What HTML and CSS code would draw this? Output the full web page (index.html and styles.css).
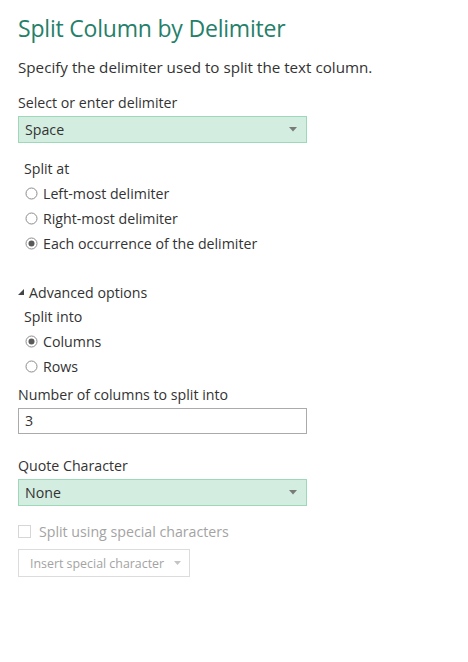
FILE: index.html
```html
<!DOCTYPE html>
<html>
<head>
<meta charset="utf-8">
<link rel="stylesheet" href="styles.css">
</head>
<body>
<div class="dialog">
  <h1 class="title">Split Column by Delimiter</h1>
  <p class="subtitle">Specify the delimiter used to split the text column.</p>

  <div class="label">Select or enter delimiter</div>
  <div class="select">
    <span>Space</span>
    <svg class="caret" width="8" height="5" viewBox="0 0 8 5"><polygon points="0,0 8,0 4,4.5" fill="#7a7a7a"/></svg>
  </div>

  <div class="group">
    <div class="label sub">Split at</div>
    <div class="radio-row">
      <svg class="radio" width="13" height="13" viewBox="0 0 13 13"><circle cx="6.5" cy="6.5" r="5.5" fill="#fff" stroke="#8c8c8c"/></svg>
      <span>Left-most delimiter</span>
    </div>
    <div class="radio-row">
      <svg class="radio" width="13" height="13" viewBox="0 0 13 13"><circle cx="6.5" cy="6.5" r="5.5" fill="#fff" stroke="#8c8c8c"/></svg>
      <span>Right-most delimiter</span>
    </div>
    <div class="radio-row">
      <svg class="radio" width="13" height="13" viewBox="0 0 13 13"><circle cx="6.5" cy="6.5" r="5.5" fill="#fff" stroke="#8c8c8c"/><circle cx="6.5" cy="6.5" r="3" fill="#5a5a5a"/></svg>
      <span>Each occurrence of the delimiter</span>
    </div>
  </div>

  <div class="advanced">
    <svg class="tri" width="6" height="6" viewBox="0 0 6 6"><polygon points="6,0 6,6 0,6" fill="#444"/></svg>
    <span>Advanced options</span>
  </div>
  <div class="group">
    <div class="label sub tight">Split into</div>
    <div class="radio-row">
      <svg class="radio" width="13" height="13" viewBox="0 0 13 13"><circle cx="6.5" cy="6.5" r="5.5" fill="#fff" stroke="#8c8c8c"/><circle cx="6.5" cy="6.5" r="3" fill="#5a5a5a"/></svg>
      <span>Columns</span>
    </div>
    <div class="radio-row">
      <svg class="radio" width="13" height="13" viewBox="0 0 13 13"><circle cx="6.5" cy="6.5" r="5.5" fill="#fff" stroke="#8c8c8c"/></svg>
      <span>Rows</span>
    </div>
  </div>

  <div class="label num">Number of columns to split into</div>
  <div class="input">3</div>

  <div class="label quote">Quote Character</div>
  <div class="select">
    <span>None</span>
    <svg class="caret" width="8" height="5" viewBox="0 0 8 5"><polygon points="0,0 8,0 4,4.5" fill="#7a7a7a"/></svg>
  </div>

  <div class="check-row">
    <span class="checkbox"></span>
    <span>Split using special characters</span>
  </div>
  <div class="button">
    <span>Insert special character</span>
    <svg class="caret" width="7" height="4" viewBox="0 0 7 4"><polygon points="0,0 7,0 3.5,4" fill="#c4c4c4"/></svg>
  </div>
</div>
</body>
</html>
```

FILE: styles.css
```css
* { box-sizing: border-box; }
html, body { margin: 0; padding: 0; background: #fff; }
body {
  font-family: "Open Sans", "Noto Sans", sans-serif;
  color: #333;
  font-size: 14px;
}
.dialog { padding: 12px 18px 0 18px; }
.title {
  margin: 0;
  font-weight: 400;
  font-size: 23px;
  line-height: 32px;
  color: #25806a;
  letter-spacing: -0.2px;
}
.subtitle {
  margin: 12px 0 0 0;
  font-size: 15.2px;
  line-height: 22px;
  color: #333;
}
.label {
  margin-top: 14px;
  height: 22px;
  line-height: 22px;
  font-size: 14.2px;
  color: #333;
}
.select {
  margin-top: 2px;
  width: 289px;
  height: 27px;
  background: #d3eee0;
  border: 1px solid #9dd8b8;
  display: flex;
  align-items: center;
  justify-content: space-between;
  padding: 0 9px 0 6px;
  font-size: 14.2px;
  color: #333;
}
.group { padding-left: 6px; margin-top: 15px; }
.label.sub { margin-top: 0; }
.radio-row {
  height: 25px;
  display: flex;
  align-items: center;
  gap: 5px;
  padding-left: 1px;
  font-size: 14.2px;
}
.radio { flex: none; }
.group .label.sub + .radio-row { margin-top: 1px; }
.advanced {
  margin-top: 24px;
  height: 24px;
  display: flex;
  align-items: center;
  gap: 5px;
  font-size: 14.2px;
}
.advanced + .group { margin-top: 0; }
.label.tight { height: 25px; line-height: 25px; }
.group .label.tight + .radio-row { margin-top: 0; }
.label.num { margin-top: 5px; }
.input {
  margin-top: 2px;
  width: 289px;
  height: 26px;
  border: 1px solid #ababab;
  background: #fff;
  padding: 0 6px;
  line-height: 24px;
  font-size: 14.2px;
  color: #333;
}
.label.quote { margin-top: 21px; }
.check-row {
  margin-top: 14px;
  height: 22px;
  display: flex;
  align-items: center;
  gap: 8px;
  color: #a3a3a3;
  font-size: 14.2px;
}
.checkbox {
  width: 13px;
  height: 13px;
  border: 1px solid #d6d6d6;
  background: #fff;
  flex: none;
}
.button {
  margin-top: 7px;
  width: 172px;
  height: 28px;
  border: 1px solid #dcdcdc;
  display: flex;
  align-items: center;
  padding: 0 0 0 11px;
  gap: 10px;
  color: #a3a3a3;
  font-size: 12.4px;
  white-space: nowrap;
}
```
